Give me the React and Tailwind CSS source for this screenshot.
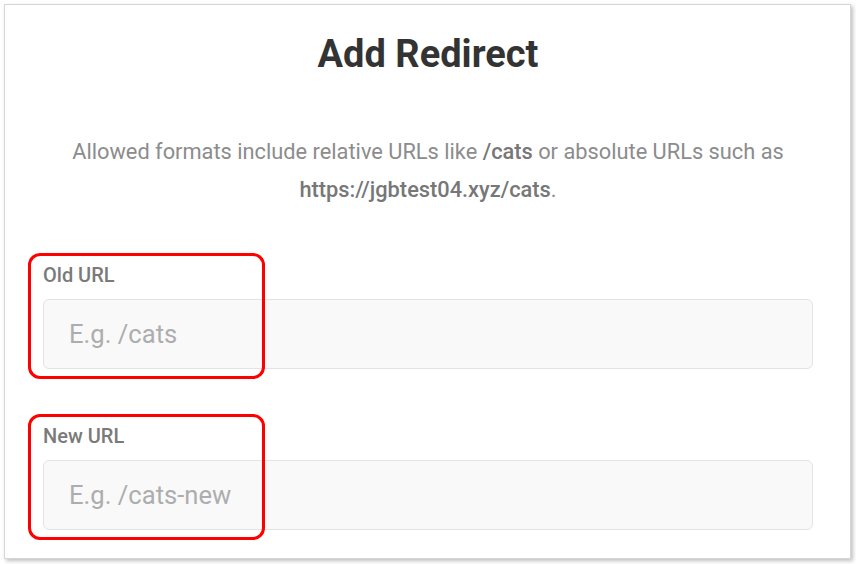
import React from "react";

function Field({ label, placeholder }) {
    return (
        <div className="relative">
            <div className="text-[20px] font-medium text-[#7a7a7a] leading-none">
                {label}
            </div>
            <div className="mt-[14px] h-[70px] rounded-md border border-[#e3e3e3] bg-[#f9f9f9] flex items-center pl-[25px]">
                <span className="text-[25.6px] text-[#adadad]">{placeholder}</span>
            </div>
            {/* red annotation box */}
            <div className="absolute left-[-15px] top-[-12px] w-[237px] h-[126px] rounded-[12px] border-[3px] border-[#ff0000]" />
        </div>
    );
}

function App() {
    return (
        <div className="w-[856px] h-[564px] bg-white p-[4px] font-['Roboto',sans-serif]">
            <div className="h-[555px] w-[847px] bg-white border border-[#d6d6d6] shadow-[2px_2px_4px_rgba(0,0,0,0.25)] pl-[38px] pr-[37px]">
                <h1 className="text-center text-[38px] font-bold text-[#333333] pt-[25px] leading-[48px]">
                    Add Redirect
                </h1>
                <p className="mt-[55px] text-center text-[21.8px] leading-[38px] text-[#8c8c8c]">
                    Allowed formats include relative URLs like{" "}
                    <span className="font-medium text-[#777777]">/cats</span> or absolute URLs such as{" "}
                    <span className="font-medium text-[#777777]">https://jgbtest04.xyz/cats</span>.
                </p>
                <div className="mt-[56px] flex flex-col gap-[57px]">
                    <Field label="Old URL" placeholder="E.g. /cats" />
                    <Field label="New URL" placeholder="E.g. /cats-new" />
                </div>
            </div>
        </div>
    );
}

export default App;
